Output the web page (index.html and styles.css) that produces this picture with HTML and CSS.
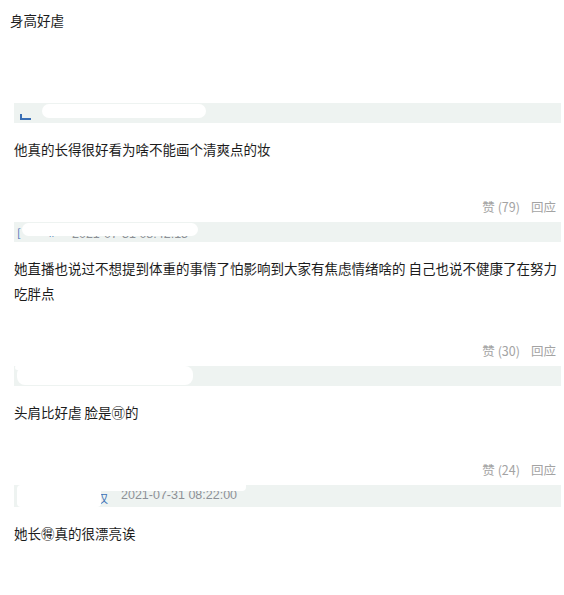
FILE: index.html
```html
<!DOCTYPE html>
<html lang="zh-CN">
<head>
    <meta charset="UTF-8">
    <meta name="viewport" content="width=device-width, initial-scale=1.0">
    <link rel="stylesheet" href="styles.css">
    <title>评论</title>
</head>
<body>

<p class="text first">身高好虐</p>

<div class="comment">
    <div class="bar">
        <span class="mark mark-l"></span>
        <span class="pill pill-1"></span>
    </div>
    <p class="text">他真的长得很好看为啥不能画个清爽点的妆</p>
    <div class="actions"><span>赞 (79)</span><span>回应</span></div>
</div>

<div class="comment">
    <div class="bar">
        <span class="mark mark-bracket">[</span>
        <span class="mark mark-dot">n</span>
        <span class="date date-2">2021-07-31 08:42:15</span>
        <span class="pill pill-2"></span>
    </div>
    <p class="text">她直播也说过不想提到体重的事情了怕影响到大家有焦虑情绪啥的 自己也说不健康了在努力吃胖点</p>
    <div class="actions"><span>赞 (30)</span><span>回应</span></div>
</div>

<div class="comment">
    <div class="bar">
        <span class="pill pill-3"></span>
        <span class="pill pill-3b"></span>
    </div>
    <p class="text">头肩比好虐 脸是🉑的</p>
    <div class="actions"><span>赞 (24)</span><span>回应</span></div>
</div>

<div class="comment">
    <div class="bar bar-tall">
        <span class="mark mark-han">汉</span>
        <span class="date date-4">2021-07-31 08:22:00</span>
        <span class="pill pill-4a"></span>
        <span class="pill pill-4b"></span>
    </div>
    <p class="text">她长🉐真的很漂亮诶</p>
</div>

</body>
</html>
```

FILE: styles.css
```css
body {
    font-family: "Noto Sans CJK SC", "Noto Sans", sans-serif;
    background: #fff;
    color: #1c1c1c;
    margin: 0;
}

.text {
    font-size: 13.5px;
    line-height: 25px;
    margin: 0;
    padding: 14px 6px 0 14px;
}

.text.first {
    padding: 8px 0 0 10px;
    margin-bottom: 70px;
}

.bar {
    position: relative;
    height: 20px;
    margin: 0 3px 0 14px;
    background: #eef3f1;
    display: flex;
    align-items: center;
}

.bar-tall {
    height: 22px;
    margin-top: 1px;
}

.pill {
    position: absolute;
    background: #fff;
    border-radius: 8px;
}

.pill-1 { left: 28px; top: 1px; width: 164px; height: 14px; }
.pill-2 { left: 8px; top: 1px; width: 176px; height: 13px; }
.pill-3 { left: 3px; top: 0; width: 176px; height: 19px; }
.pill-3b { left: 1px; top: -1px; width: 36px; height: 5px; border-radius: 3px; }
.pill-4a { left: 3px; top: 0; width: 84px; height: 22px; border-radius: 4px; }
.pill-4b { left: 26px; top: -5px; width: 206px; height: 11px; border-radius: 4px; }

.mark {
    color: #3a6fb5;
    font-size: 11px;
}

.mark-l {
    width: 9px;
    height: 4px;
    margin: 8px 0 0 6px;
    border-left: 2px solid #3a6fb5;
    border-bottom: 2px solid #3a6fb5;
}

.mark-bracket {
    margin-left: 3px;
}

.mark-dot {
    position: absolute;
    left: 35px;
    top: 6px;
    font-size: 8px;
}

.mark-han {
    position: absolute;
    left: 83px;
    top: 5px;
}

.date {
    position: absolute;
    font-family: "Liberation Sans", sans-serif;
    font-size: 12.5px;
    color: #8d9096;
}

.date-2 { left: 58px; top: 5px; }
.date-4 { left: 107px; top: 3px; }

.actions {
    display: flex;
    justify-content: flex-end;
    gap: 11px;
    margin: 35px 0 5px;
    padding-right: 8px;
    font-size: 12.5px;
    line-height: 20px;
    color: #a3a3a3;
}
```
